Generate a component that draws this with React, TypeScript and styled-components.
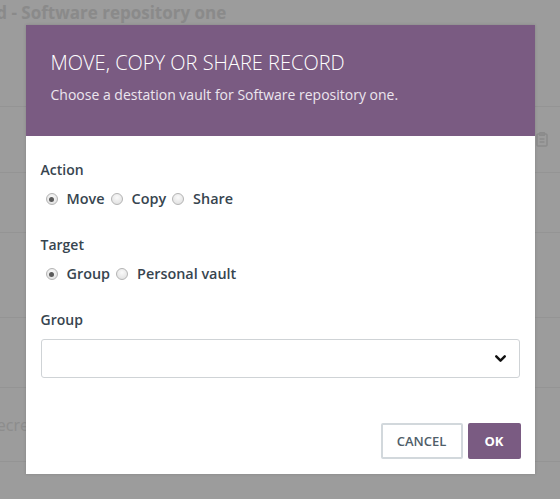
import React from 'react';
import styled, { createGlobalStyle } from 'styled-components';
import { ChevronDown } from 'lucide-react';

const GlobalStyle = createGlobalStyle`
	html, body {
		margin: 0;
		padding: 0;
		width: 560px;
		height: 499px;
		overflow: hidden;
		background: #fff;
		font-family: 'Open Sans', 'Liberation Sans', sans-serif;
	}
	* {
		box-sizing: border-box;
	}
`;

const Screen = styled.div`
	position: relative;
	width: 560px;
	height: 499px;
	overflow: hidden;
`;

const BackPage = styled.div`
	margin-left: -54px;
	width: 664px;
	color: #d8d8d8;

	h2 {
		margin: 0;
		padding: 1px 0 0 2px;
		height: 40px;
		font-size: 17px;
		font-weight: 700;
		line-height: 24px;
		color: #e2e2e2;
	}
`;

const BackRow = styled.div<{ $h: number }>`
	height: ${(p) => p.$h}px;
	border-bottom: 1px solid #f2f2f2;
	display: flex;
	align-items: center;
	justify-content: space-between;
	padding: 0 62px 0 42px;
	font-size: 16px;
	color: #e6e6e6;
`;

const Overlay = styled.div`
	position: absolute;
	inset: 0;
	background: rgba(0, 0, 0, 0.39);
	display: flex;
	align-items: center;
	justify-content: center;
`;

const Modal = styled.div`
	width: 509px;
	height: 449px;
	background: #fff;
	display: flex;
	flex-direction: column;
	box-shadow: 0 0 3px rgba(0, 0, 0, 0.15);
`;

const ModalHeader = styled.header`
	background: #7a5b82;
	height: 111px;
	padding: 24px 25px 0 25px;
	color: #fff;

	h3 {
		margin: 0;
		font-size: 20px;
		font-weight: 300;
		line-height: 28px;
	}

	p {
		margin: 8px 0 0 0;
		font-size: 14px;
		font-weight: 400;
		line-height: 20px;
		color: #ece6ee;
	}
`;

const ModalBody = styled.div`
	flex: 1;
	padding: 24px 15px 0 15px;
	display: flex;
	flex-direction: column;
`;

const Field = styled.div<{ $gap?: number }>`
	margin-bottom: ${(p) => p.$gap ?? 25}px;
`;

const FieldLabel = styled.div`
	font-size: 14px;
	font-weight: 600;
	color: #37454f;
	line-height: 20px;
	margin-bottom: 9px;
`;

const RadioGroup = styled.div`
	display: flex;
	align-items: center;
	padding-left: 5px;
`;

const RadioLabel = styled.label`
	display: flex;
	align-items: center;
	font-size: 14.4px;
	font-weight: 600;
	color: #37454f;
	line-height: 20px;
	margin-right: 6px;
`;

const RadioDot = styled.span<{ $checked?: boolean }>`
	width: 12px;
	height: 12px;
	border-radius: 50%;
	border: 1px solid #b4b4b4;
	background: radial-gradient(circle at 50% 35%, #fafafa, #dcdcdc);
	margin-right: 9px;
	display: flex;
	align-items: center;
	justify-content: center;

	&::after {
		content: '';
		width: 5px;
		height: 5px;
		border-radius: 50%;
		background: ${(p) => (p.$checked ? '#5a5a5a' : 'transparent')};
	}
`;

const Select = styled.div`
	height: 39px;
	border: 1px solid #cfd3d6;
	border-radius: 3px;
	display: flex;
	align-items: center;
	justify-content: flex-end;
	padding-right: 10px;
	color: #111;
`;

const Footer = styled.footer`
	display: flex;
	justify-content: flex-end;
	gap: 5px;
	padding: 0 14px 15px 15px;
`;

const Button = styled.button<{ $primary?: boolean }>`
	height: 36px;
	border-radius: 2px;
	font-family: 'Open Sans', 'Liberation Sans', sans-serif;
	font-size: 13px;
	font-weight: ${(p) => (p.$primary ? 700 : 600)};
	padding: 0 ${(p) => (p.$primary ? '12px' : '10px')};
	border: 2px solid ${(p) => (p.$primary ? '#7a5b82' : '#d2d8dc')};
	background: ${(p) => (p.$primary ? '#7a5b82' : '#fff')};
	color: ${(p) => (p.$primary ? '#fff' : '#4f5e69')};
	width: ${(p) => (p.$primary ? '53px' : '82px')};
`;

const ClipIcon = () => (
	<svg width="12" height="15" viewBox="0 0 12 15" fill="none" stroke="#e4e4e4" strokeWidth="1.5">
		<rect x="1" y="2" width="10" height="12" rx="1" />
		<rect x="3.5" y="0.8" width="5" height="2.5" rx="0.5" />
		<path d="M3.5 7h5M3.5 10h5" />
	</svg>
);

const options = {
	action: ['Move', 'Copy', 'Share'],
	target: ['Group', 'Personal vault'],
};

export default function App() {
	return (
		<Screen>
			<GlobalStyle />
			<BackPage>
				<h2>Record - Software repository one</h2>
				<BackRow $h={67} />
				<BackRow $h={66}>
					<span />
					<ClipIcon />
				</BackRow>
				<BackRow $h={60} />
				<BackRow $h={85} />
				<BackRow $h={70} />
				<BackRow $h={74}>
					<span>Secret</span>
				</BackRow>
			</BackPage>
			<Overlay>
				<Modal>
					<ModalHeader>
						<h3>MOVE, COPY OR SHARE RECORD</h3>
						<p>Choose a destation vault for Software repository one.</p>
					</ModalHeader>
					<ModalBody>
						<Field $gap={26}>
							<FieldLabel>Action</FieldLabel>
							<RadioGroup>
								{options.action.map((o, i) => (
									<RadioLabel key={o}>
										<RadioDot $checked={i === 0} />
										{o}
									</RadioLabel>
								))}
							</RadioGroup>
						</Field>
						<Field $gap={26}>
							<FieldLabel>Target</FieldLabel>
							<RadioGroup>
								{options.target.map((o, i) => (
									<RadioLabel key={o}>
										<RadioDot $checked={i === 0} />
										{o}
									</RadioLabel>
								))}
							</RadioGroup>
						</Field>
						<Field>
							<FieldLabel>Group</FieldLabel>
							<Select>
								<ChevronDown size={17} strokeWidth={3.5} />
							</Select>
						</Field>
					</ModalBody>
					<Footer>
						<Button>CANCEL</Button>
						<Button $primary>OK</Button>
					</Footer>
				</Modal>
			</Overlay>
		</Screen>
	);
}
